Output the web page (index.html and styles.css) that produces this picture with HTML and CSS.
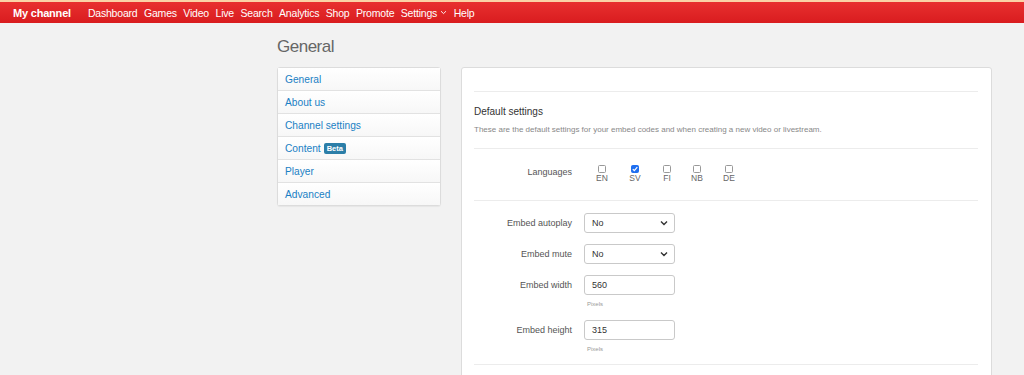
FILE: index.html
```html
<!DOCTYPE html>
<html>
<head>
<meta charset="utf-8">
<link rel="stylesheet" href="styles.css">
</head>
<body>
<header class="topbar">
  <a class="brand">My channel</a>
  <nav class="nav">
    <a>Dashboard</a><a>Games</a><a>Video</a><a>Live</a><a>Search</a><a>Analytics</a><a>Shop</a><a>Promote</a>
    <a class="dd">Settings <svg width="7" height="5" viewBox="0 0 7 5"><path d="M1 1.2 L3.5 3.6 L6 1.2" fill="none" stroke="#fff" stroke-width="0.9"/></svg></a>
    <a>Help</a>
  </nav>
</header>
<div class="page">
  <h1 class="title">General</h1>
  <div class="cols">
    <ul class="side">
      <li><a>General</a></li>
      <li><a>About us</a></li>
      <li><a>Channel settings</a></li>
      <li><a>Content</a> <span class="badge">Beta</span></li>
      <li><a>Player</a></li>
      <li><a>Advanced</a></li>
    </ul>
    <section class="panel">
      <hr class="sep first">
      <h2 class="h2">Default settings</h2>
      <p class="sub">These are the default settings for your embed codes and when creating a new video or livestream.</p>
      <hr class="sep">
      <div class="row langs">
        <div class="lbl">Languages</div>
        <div class="checks">
          <label class="chk"><span class="box"></span>EN</label>
          <label class="chk"><span class="box on"><svg width="8" height="8" viewBox="0 0 8 8"><path d="M1.8 4.2 L3.3 5.7 L6.3 2.2" fill="none" stroke="#fff" stroke-width="1.2"/></svg></span>SV</label>
          <label class="chk"><span class="box"></span>FI</label>
          <label class="chk"><span class="box"></span>NB</label>
          <label class="chk"><span class="box"></span>DE</label>
        </div>
      </div>
      <hr class="sep">
      <div class="form">
        <div class="row">
          <div class="lbl">Embed autoplay</div>
          <div class="ctl"><div class="select">No<svg width="8" height="6" viewBox="0 0 8 6"><path d="M1 1.5 L4 4.5 L7 1.5" fill="none" stroke="#333" stroke-width="1.4"/></svg></div></div>
        </div>
        <div class="row">
          <div class="lbl">Embed mute</div>
          <div class="ctl"><div class="select">No<svg width="8" height="6" viewBox="0 0 8 6"><path d="M1 1.5 L4 4.5 L7 1.5" fill="none" stroke="#333" stroke-width="1.4"/></svg></div></div>
        </div>
        <div class="row">
          <div class="lbl">Embed width</div>
          <div class="ctl"><div class="input">560</div><div class="help">Pixels</div></div>
        </div>
        <div class="row">
          <div class="lbl">Embed height</div>
          <div class="ctl"><div class="input">315</div><div class="help">Pixels</div></div>
        </div>
      </div>
      <hr class="sep last">
    </section>
  </div>
</div>
</body>
</html>
```

FILE: styles.css
```css
* { box-sizing: border-box; }
html, body { margin: 0; padding: 0; }
body {
  background: #f2f2f2;
  font-family: "Liberation Sans", Arial, sans-serif;
  color: #333;
  height: 375px;
  overflow: hidden;
}
.topbar {
  height: 23px;
  border-top: 2px solid #fbd3a6;
  background: linear-gradient(#e8302f, #d91c1f);
  display: flex;
  align-items: center;
  padding-left: 13px;
  color: #fff;
}
.brand {
  font-weight: bold;
  font-size: 11px;
  letter-spacing: -0.2px;
  margin-right: 17px;
}
.nav { display: flex; gap: 6.5px; font-size: 10.5px; }
.nav a { color: #fff; display: flex; align-items: center; letter-spacing: -0.2px; }
.nav .dd svg { margin-left: 3px; }
.page { padding-left: 277px; width: 992px; }
.title {
  font-weight: normal;
  font-size: 17px;
  color: #666;
  margin: 14px 0 10px;
  letter-spacing: -0.5px;
  line-height: 20px;
}
.cols { display: flex; gap: 20px; align-items: flex-start; }
.side {
  list-style: none;
  margin: 0;
  padding: 0;
  width: 164px;
  border: 1px solid #dcdcdc;
  border-radius: 3px;
  background: #fff;
  box-shadow: 0 1px 1px rgba(0,0,0,0.05);
}
.side li {
  height: 23px;
  display: flex;
  align-items: center;
  padding-left: 7px;
  font-size: 10.2px;
  background: linear-gradient(#fff, #f7f7f7);
  border-top: 1px solid #e2e2e2;
}
.side li:first-child { border-top: none; height: 22px; }
.side a { color: #1a7fc4; }
.badge {
  display: inline-block;
  margin-left: 3px;
  background: #2b7ea8;
  color: #fff;
  font-weight: bold;
  font-size: 7.5px;
  padding: 1px 3px;
  border-radius: 2px;
  line-height: 9px;
}
.panel {
  flex: 1;
  background: #fff;
  border: 1px solid #dcdcdc;
  border-radius: 3px;
  padding: 23px 13px 20px 12px;
  height: 320px;
}
.sep { border: none; border-top: 1px solid #ececec; margin: 0; }
.h2 {
  font-weight: normal;
  font-size: 10px;
  color: #333;
  margin: 13px 0 0;
  line-height: 13px;
}
.sub {
  font-size: 8px;
  color: #888;
  margin: 6px 0 13px;
  line-height: 11px;
}
.row { display: flex; }
.lbl {
  width: 98px;
  text-align: right;
  font-size: 9px;
  color: #555;
  padding-right: 0;
}
.langs { padding: 16px 0 17px; }
.langs .lbl { line-height: 12px; padding-top: 1px; }
.checks { display: flex; margin-left: 15px; }
.chk {
  display: flex;
  flex-direction: column;
  align-items: center;
  font-size: 8.5px;
  color: #666;
  line-height: 10px;
  width: 32px;
  margin-right: 0;
}
.chk:nth-child(1) { width: 30px; }
.chk:nth-child(2) { width: 36px; }
.chk:nth-child(3) { width: 28px; }
.chk:nth-child(4) { width: 32px; }
.box {
  width: 8px;
  height: 8px;
  border: 1px solid #999;
  border-radius: 1.5px;
  background: #fff;
  display: flex;
}
.box.on { background: #1f6ff0; border-color: #1f6ff0; }
.box svg { margin: -1px; }
.form { padding: 12px 0 0; }
.form .row { margin-bottom: 11px; }
.form .row:nth-child(3) { margin-bottom: 12px; }
.form .lbl { line-height: 20px; }
.ctl { margin-left: 12px; }
.select, .input {
  width: 91px;
  height: 20px;
  border: 1px solid #c9c9c9;
  border-radius: 3px;
  font-size: 9px;
  color: #333;
  display: flex;
  align-items: center;
  justify-content: space-between;
  padding: 0 6px 0 7px;
  background: #fff;
}
.help {
  font-size: 6px;
  color: #999;
  margin: 5px 0 0 3px;
  line-height: 8px;
}
.last { margin-top: 0; }
```
